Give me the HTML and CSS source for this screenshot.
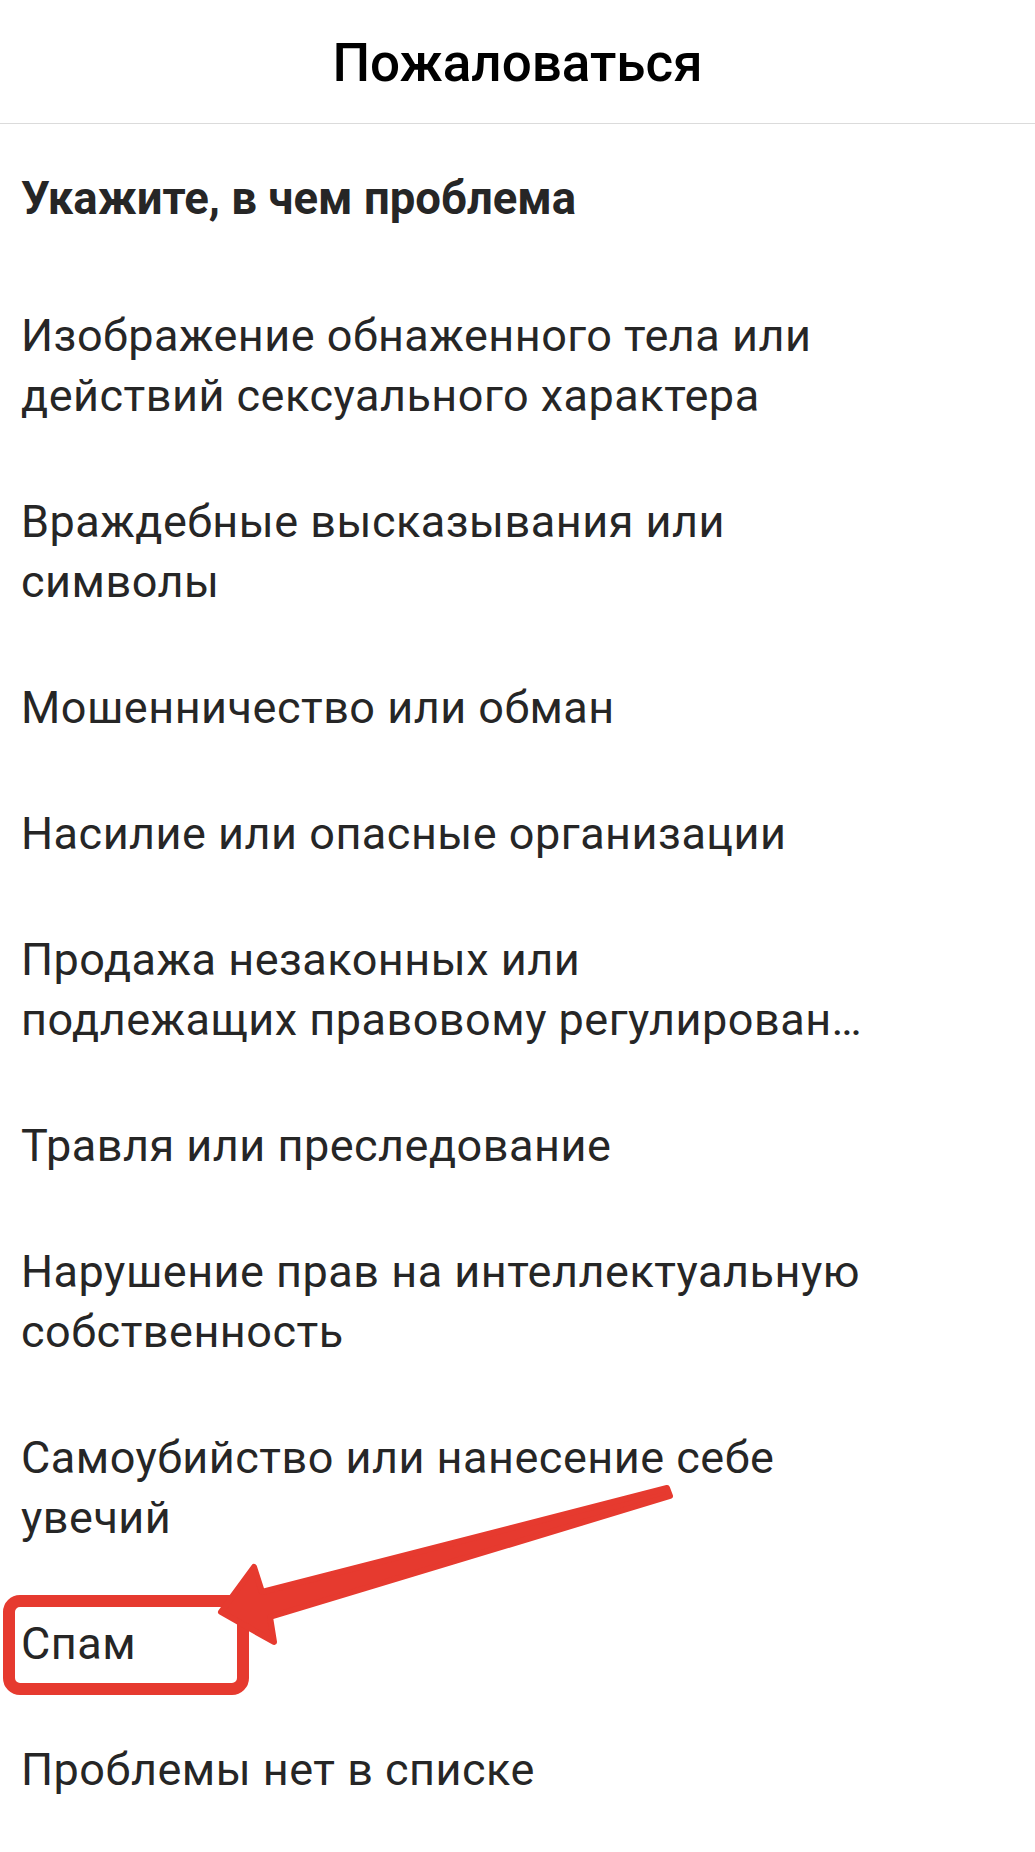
FILE: index.html
```html
<!DOCTYPE html>
<html lang="ru">
<head>
<meta charset="utf-8">
<title>Пожаловаться</title>
<link rel="stylesheet" href="styles.css">
</head>
<body>
<div class="page">
  <header class="top-bar">
    <h1 class="title">Пожаловаться</h1>
  </header>
  <main class="content">
    <h2 class="prompt">Укажите, в чем проблема</h2>
    <ul class="reasons">
      <li class="reason">Изображение обнаженного тела или действий сексуального характера</li>
      <li class="reason">Враждебные высказывания или символы</li>
      <li class="reason">Мошенничество или обман</li>
      <li class="reason">Насилие или опасные организации</li>
      <li class="reason"><span class="line">Продажа незаконных или</span><span class="line truncate">подлежащих правовому регулированию товаров</span></li>
      <li class="reason">Травля или преследование</li>
      <li class="reason">Нарушение прав на интеллектуальную собственность</li>
      <li class="reason">Самоубийство или нанесение себе увечий</li>
      <li class="reason">Спам</li>
      <li class="reason">Проблемы нет в списке</li>
    </ul>
  </main>
  <svg class="annotation" width="1035" height="1852" viewBox="0 0 1035 1852" aria-hidden="true">
    <rect class="mark-box" x="9" y="1601" width="234" height="88" rx="11" ry="11"/>
    <polygon class="mark-arrow" points="221,1612 254,1567 262,1592 667,1488 670,1496 270,1617 274,1642"/>
  </svg>
</div>
</body>
</html>
```

FILE: styles.css
```css
html, body {
  margin: 0;
  padding: 0;
  background: #ffffff;
}

body {
  font-family: Roboto, "Noto Sans", "Liberation Sans", sans-serif;
  color: #262626;
}

.page {
  position: relative;
  width: 1035px;
  min-height: 1852px;
  overflow: hidden;
}

.top-bar {
  height: 120px;
  padding-top: 3px;
  border-bottom: 1px solid #dbdbdb;
  display: flex;
  align-items: center;
  justify-content: center;
}

.title {
  margin: 0;
  font-size: 53px;
  line-height: 1;
  font-weight: 500;
  color: #000000;
}

.prompt {
  margin: 0;
  padding: 45px 21px 0;
  font-size: 45.5px;
  line-height: 60px;
  font-weight: 700;
  color: #262626;
}

.reasons {
  list-style: none;
  margin: 44px 0 0;
  padding: 0;
}

.reason {
  padding: 33px 170px 33px 21px;
  font-size: 45px;
  letter-spacing: 0.5px;
  line-height: 60px;
  font-weight: 400;
  color: #262626;
}

.line {
  display: block;
}

.truncate {
  white-space: nowrap;
  overflow: hidden;
  text-overflow: ellipsis;
}

.annotation {
  position: absolute;
  left: 0;
  top: 0;
  pointer-events: none;
}

.mark-box {
  fill: none;
  stroke: #e63a2f;
  stroke-width: 12;
}

.mark-arrow {
  fill: #e63a2f;
  stroke: #e63a2f;
  stroke-width: 6;
  stroke-linejoin: round;
}
```
